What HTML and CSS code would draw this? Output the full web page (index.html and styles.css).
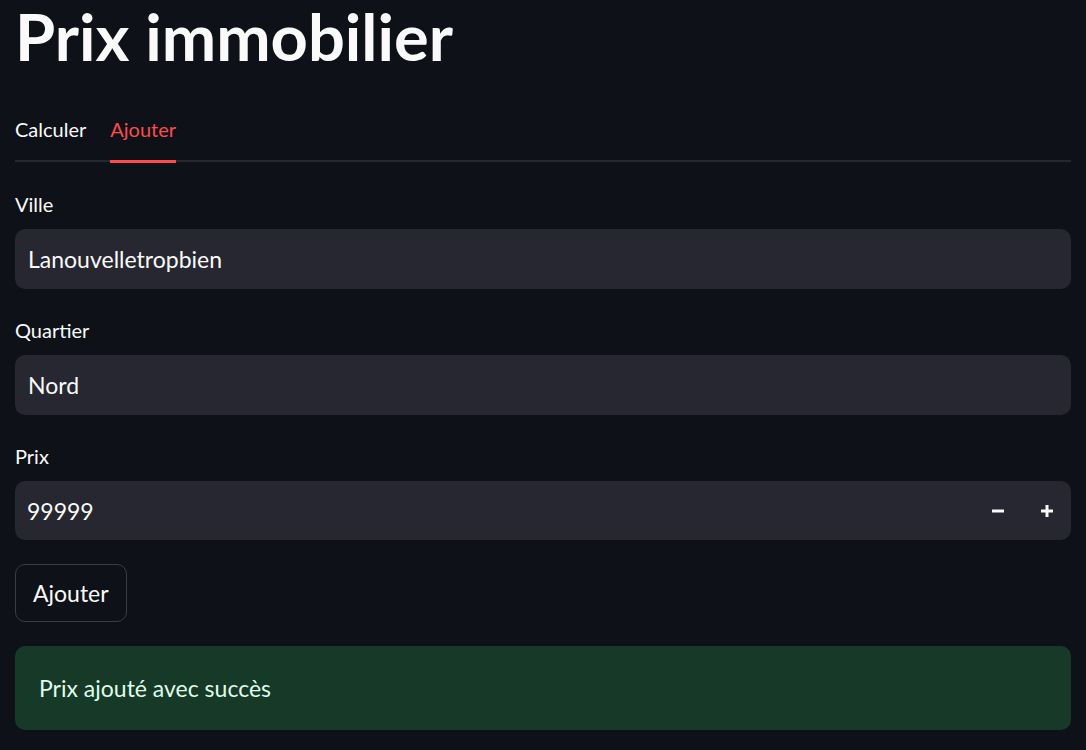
FILE: index.html
```html
<!DOCTYPE html>
<html lang="fr">
<head>
<meta charset="utf-8">
<title>Prix immobilier</title>
<link rel="stylesheet" href="styles.css">
</head>
<body>
<main class="main">
  <h1 class="title">Prix immobilier</h1>
  <div class="tabs">
    <div class="tab">Calculer</div>
    <div class="tab active">Ajouter</div>
  </div>
  <section class="panel">
    <div class="field">
      <label class="label">Ville</label>
      <div class="input"><span class="value">Lanouvelletropbien</span></div>
    </div>
    <div class="field">
      <label class="label">Quartier</label>
      <div class="input"><span class="value">Nord</span></div>
    </div>
    <div class="field last">
      <label class="label">Prix</label>
      <div class="input number"><span class="value num">99999</span>
        <div class="steps">
          <button class="step" aria-label="moins"><svg width="12" height="12" viewBox="0 0 12 12"><rect x="0" y="4.5" width="12" height="3" fill="#fafafa"/></svg></button>
          <button class="step" aria-label="plus"><svg width="12" height="12" viewBox="0 0 12 12"><rect x="0" y="4.5" width="12" height="3" fill="#fafafa"/><rect x="4.5" y="0" width="3" height="12" fill="#fafafa"/></svg></button>
        </div>
      </div>
    </div>
    <button class="btn">Ajouter</button>
    <div class="alert">Prix ajouté avec succès</div>
  </section>
</main>
</body>
</html>
```
FILE: styles.css
```css
* { box-sizing: border-box; }
html, body { margin: 0; padding: 0; }
body {
  background: #0e1117;
  color: #fafafa;
  font-family: Lato, "Noto Sans", sans-serif;
  width: 1086px;
  height: 750px;
  overflow: hidden;
}
.main {
  padding: 0 15px;
  display: flex;
  flex-direction: column;
}
.title {
  margin: 0;
  padding-top: 3px;
  font-size: 65px;
  line-height: 66px;
  font-weight: 700;
  height: 100px;
}
.tabs {
  display: flex;
  gap: 24px;
  height: 62px;
  border-bottom: 2px solid #26272f;
}
.tab {
  position: relative;
  font-size: 20px;
  line-height: 58px;
  height: 60px;
  color: #fafafa;
}
.tab.active { color: #ff4b4b; }
.tab.active::after {
  content: "";
  position: absolute;
  left: 0;
  right: 0;
  top: 60px;
  height: 3px;
  background: #ff4b4b;
}
.panel {
  padding-top: 28px;
  display: flex;
  flex-direction: column;
}
.field {
  display: flex;
  flex-direction: column;
  margin-bottom: 27px;
}
.field.last { margin-bottom: 24px; }
.label {
  font-size: 20px;
  line-height: 29px;
  height: 31px;
  margin-bottom: 8px;
}
.input {
  height: 60px;
  background: #262730;
  border-radius: 10px;
  display: flex;
  align-items: center;
  padding-left: 13px;
}
.number { height: 59px; }
.value {
  font-size: 23px;
}
.num { margin-left: -1px; }
.steps {
  margin-left: auto;
  display: flex;
  height: 100%;
}
.step {
  width: 49px;
  height: 100%;
  background: transparent;
  border: 0;
  padding: 0;
  display: flex;
  align-items: center;
  justify-content: center;
}
.btn {
  align-self: flex-start;
  height: 58px;
  padding: 0 17px;
  background: #0e1117;
  color: #fafafa;
  border: 1px solid #3b3d45;
  border-radius: 10px;
  font-family: inherit;
  font-size: 23px;
  margin-bottom: 24px;
}
.alert {
  height: 84px;
  background: #173928;
  color: #dffde9;
  border-radius: 10px;
  padding: 0 24px;
  display: flex;
  align-items: center;
  font-size: 23px;
}
```
